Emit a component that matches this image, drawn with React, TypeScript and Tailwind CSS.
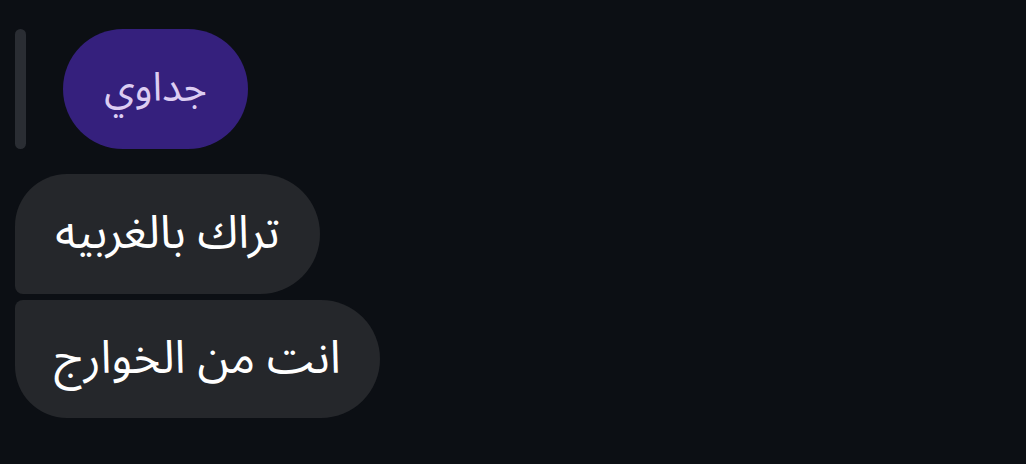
export default function App() {
  return (
    <div
      className="min-h-[464px] w-full bg-[#0c0f14] pl-[15px] pt-[29px]"
      style={{ fontFamily: '"Noto Sans Arabic", "DejaVu Sans", sans-serif' }}
    >
      <div className="flex flex-col items-start">
        {/* reply header */}
        <div className="flex items-stretch gap-[37px]">
          <div className="w-[11px] rounded-full bg-[#2a2d33]" />
          <div
            dir="rtl"
            className="flex h-[120px] w-[185px] items-center justify-center rounded-full bg-[#35207d] text-[40px] leading-none text-[#dccdf2]"
          >
            جداوي
          </div>
        </div>

        {/* messages */}
        <div className="mt-[25px] flex flex-col items-start gap-[6px]">
          <div
            dir="rtl"
            className="flex h-[120px] w-[305px] items-center justify-center rounded-tl-[52px] rounded-bl-[8px] rounded-r-[60px] bg-[#25272b] text-[46px] leading-none text-white"
          >
            تراك بالغربيه
          </div>
          <div
            dir="rtl"
            className="flex h-[118px] w-[365px] items-center justify-center rounded-tl-[8px] rounded-bl-[52px] rounded-r-[59px] bg-[#25272b] text-[46px] leading-none text-white"
          >
            انت من الخوارج
          </div>
        </div>
      </div>
    </div>
  );
}
